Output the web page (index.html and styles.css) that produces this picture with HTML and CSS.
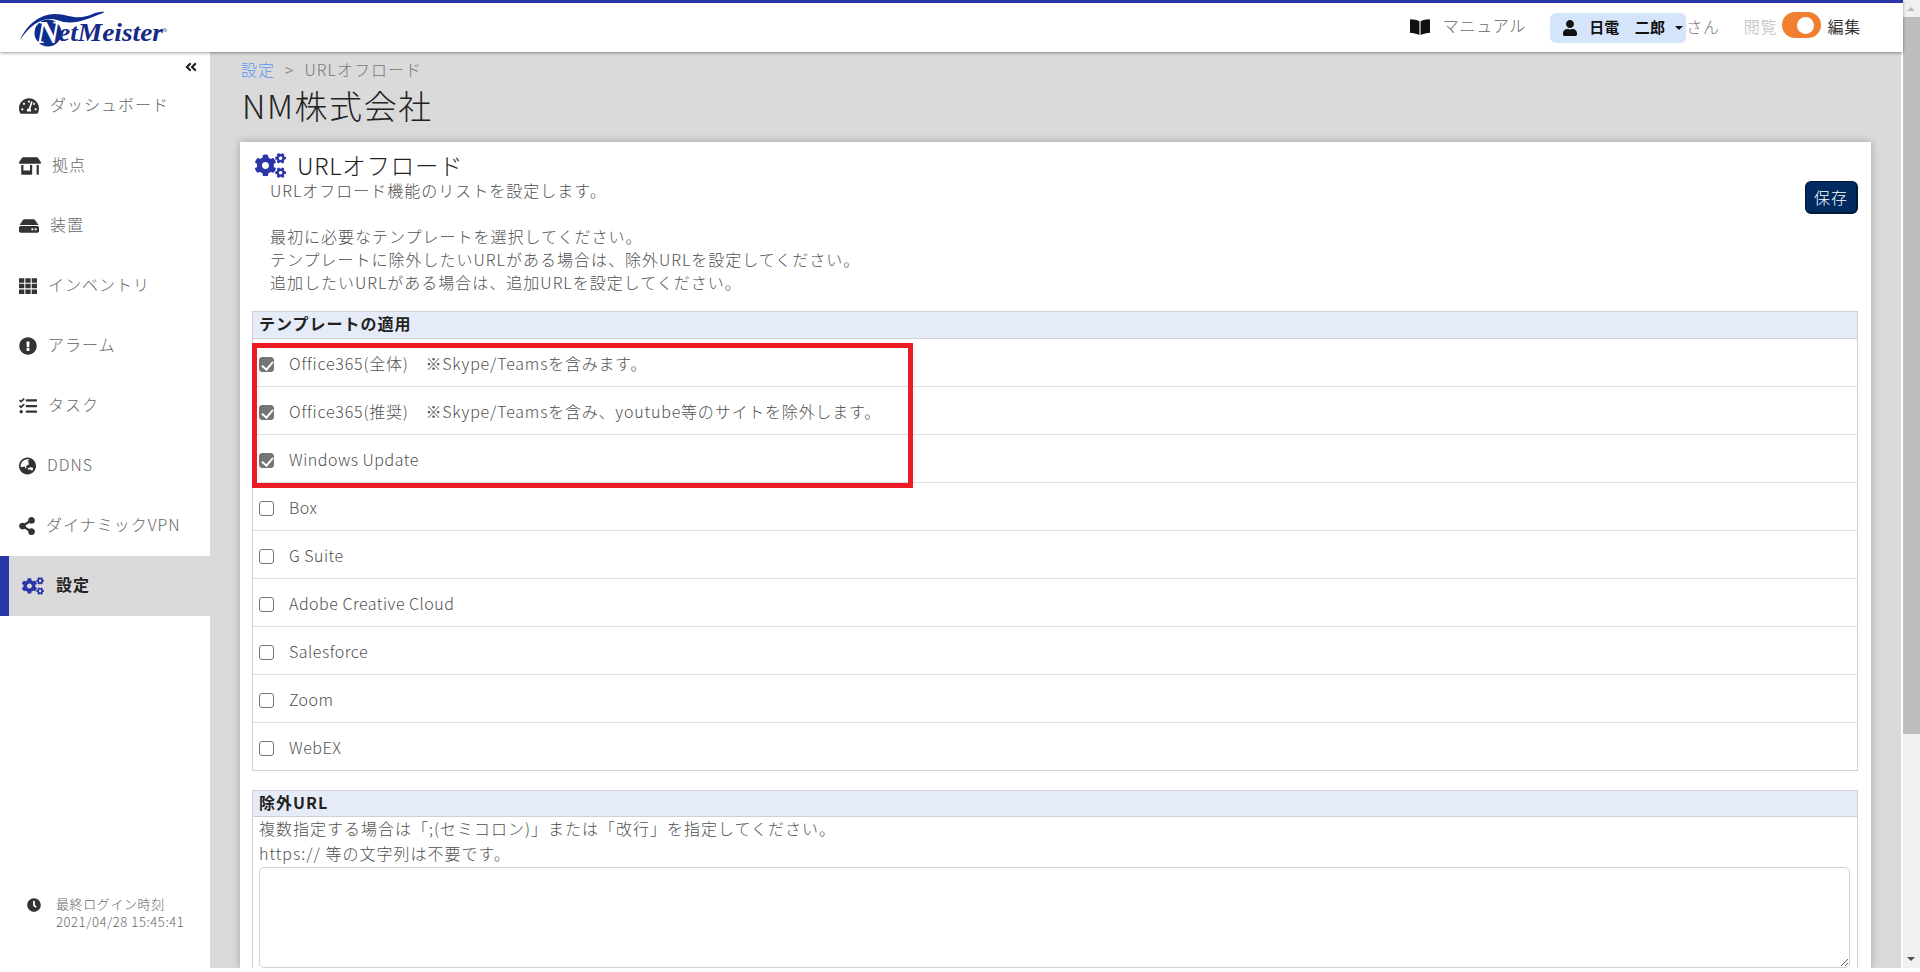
FILE: index.html
```html
<!DOCTYPE html>
<html lang="ja">
<head>
<meta charset="utf-8">
<title>URLオフロード</title>
<link rel="stylesheet" href="styles.css">
</head>
<body>
<div class="app">
  <div class="page">
    <header class="topbar">
      <a class="logo" href="#">
        <svg width="150" height="36" viewBox="0 0 150 36">
          <path class="logo-swoosh" d="M1 27C7 13 20 1 36 1c14 0 22 8 40-1 6-1 12-2 8 0C66 7 54 13 38 7 26 3 12 10 1 27z"/>
          <circle class="logo-disc" cx="29" cy="20" r="13.5"/>
          <text class="logo-n" x="17" y="30" textLength="24" lengthAdjust="spacingAndGlyphs">N</text>
          <text class="logo-text" x="39" y="28" textLength="105" lengthAdjust="spacingAndGlyphs">etMeister</text>
          <circle class="logo-reg" cx="146" cy="17" r="1.4"/>
        </svg>
      </a>
      <div class="top-right">
        <svg class="ic-book" viewBox="0 0 576 512" width="20" height="18"><path d="M542.22 32.05c-54.8 3.11-163.72 14.43-230.96 55.59-4.64 2.84-7.27 7.89-7.27 13.17v363.87c0 11.55 12.63 18.85 23.28 13.49 69.18-34.82 169.23-44.32 218.7-46.92 16.89-.89 30.02-14.43 30.02-30.66V62.75c.01-17.71-15.35-31.74-33.77-30.7zM264.73 87.64C197.5 46.48 88.58 35.17 33.78 32.05 15.36 31.01 0 45.04 0 62.75V400.6c0 16.24 13.13 29.78 30.02 30.66 49.49 2.6 149.59 12.11 218.77 46.95 10.62 5.35 23.21-1.94 23.21-13.46V100.63c0-5.29-2.62-10.1-7.27-12.99z"/></svg>
        <span class="manual">マニュアル</span>
        <div class="user-chip">
          <svg viewBox="0 0 448 512" width="14" height="16"><path d="M224 256c70.7 0 128-57.3 128-128S294.7 0 224 0 96 57.3 96 128s57.3 128 128 128zm89.6 32h-16.7c-22.2 10.2-46.9 16-72.9 16s-50.6-5.8-72.9-16h-16.7C60.2 288 0 348.2 0 422.4V464c0 26.5 21.5 48 48 48h352c26.5 0 48-21.5 48-48v-41.6c0-74.2-60.2-134.4-134.4-134.4z"/></svg>
          <span class="user-name">日電　二郎</span>
          <span class="caret"></span>
        </div>
        <span class="san">さん</span>
        <span class="view-label">閲覧</span>
        <span class="toggle"><span class="knob"></span></span>
        <span class="edit-label">編集</span>
      </div>
    </header>

    <div class="body-row">
      <aside class="sidebar">
        <div class="collapse">
          <svg viewBox="0 0 448 512" width="12" height="14"><path d="M223.7 239l136-136c9.4-9.4 24.6-9.4 33.9 0l22.6 22.6c9.4 9.4 9.4 24.6 0 33.9L319.9 256l96.4 96.4c9.4 9.4 9.4 24.6 0 33.9L393.7 409c-9.4 9.4-24.6 9.4-33.9 0l-136-136c-9.5-9.4-9.5-24.6-.1-34zm-192 34l136 136c9.4 9.4 24.6 9.4 33.9 0l22.6-22.6c9.4-9.4 9.4-24.6 0-33.9L127.9 256l96.4-96.4c9.4-9.4 9.4-24.6 0-33.9L201.7 103c-9.4-9.4-24.6-9.4-33.9 0l-136 136c-9.5 9.4-9.5 24.6-.1 34z"/></svg>
        </div>
        <nav class="menu">
          <a class="menu-item" href="#"><svg viewBox="0 0 576 512" width="20" height="18"><path d="M288 32C128.94 32 0 160.94 0 320c0 52.8 14.25 102.26 39.06 144.8 5.61 9.62 16.3 15.2 27.44 15.2h443c11.14 0 21.83-5.58 27.44-15.2C561.75 422.26 576 372.8 576 320c0-159.06-128.94-288-288-288zm0 64c14.71 0 26.58 10.13 30.32 23.65-1.11 2.26-2.64 4.23-3.45 6.67l-9.22 27.67c-5.13 3.49-10.97 6.01-17.64 6.01-17.67 0-32-14.33-32-32S270.33 96 288 96zM96 384c-17.67 0-32-14.33-32-32s14.33-32 32-32 32 14.33 32 32-14.33 32-32 32zm48-160c-17.67 0-32-14.33-32-32s14.33-32 32-32 32 14.33 32 32-14.33 32-32 32zm246.77-72.41l-61.33 184C343.13 347.33 352 364.54 352 384c0 11.72-3.38 22.55-8.88 32H232.88c-5.5-9.45-8.88-20.28-8.88-32 0-33.94 26.5-61.43 59.9-63.59l61.34-184.01c4.17-12.56 17.73-19.45 30.36-15.17 12.57 4.19 19.35 17.79 15.17 30.36zm14.66 57.2l15.52-46.55c3.47-1.29 7.13-2.23 11.05-2.23 17.67 0 32 14.33 32 32s-14.33 32-32 32c-11.38-.01-20.89-6.28-26.57-15.22zM480 384c-17.67 0-32-14.33-32-32s14.33-32 32-32 32 14.33 32 32-14.33 32-32 32z"/></svg><span>ダッシュボード</span></a>
          <a class="menu-item" href="#"><svg viewBox="0 0 640 512" width="22" height="18"><path d="M320 384H128V224H64v256c0 17.7 14.3 32 32 32h256c17.7 0 32-14.3 32-32V224h-64v160zm314.6-241.8l-85.3-128c-6-8.9-16-14.2-26.7-14.2H117.4c-10.7 0-20.7 5.3-26.6 14.2l-85.3 128c-14.2 21.3 1 49.8 26.6 49.8H608c25.5 0 40.7-28.5 26.6-49.8zM512 496c0 8.8 7.2 16 16 16h32c8.8 0 16-7.2 16-16V224h-64v272z"/></svg><span>拠点</span></a>
          <a class="menu-item" href="#"><svg viewBox="0 0 576 512" width="20" height="18"><path d="M576 304v96c0 26.51-21.49 48-48 48H48c-26.51 0-48-21.49-48-48v-96c0-26.51 21.49-48 48-48h480c26.51 0 48 21.49 48 48zm-48-80a79.557 79.557 0 0 1 30.777 6.165L462.25 85.374A48.003 48.003 0 0 0 422.311 64H153.689a48 48 0 0 0-39.938 21.374L17.223 230.165A79.557 79.557 0 0 1 48 224h480zm-48 96c-17.673 0-32 14.327-32 32s14.327 32 32 32 32-14.327 32-32-14.327-32-32-32zm-96 0c-17.673 0-32 14.327-32 32s14.327 32 32 32 32-14.327 32-32-14.327-32-32-32z"/></svg><span>装置</span></a>
          <a class="menu-item" href="#"><svg viewBox="0 0 512 512" width="18" height="18"><path d="M0 32h150v128H0zM181 32h150v128H181zM362 32h150v128H362zM0 192h150v128H0zM181 192h150v128H181zM362 192h150v128H362zM0 352h150v128H0zM181 352h150v128H181zM362 352h150v128H362z"/></svg><span>インベントリ</span></a>
          <a class="menu-item" href="#"><svg viewBox="0 0 512 512" width="18" height="18"><path d="M504 256c0 136.997-111.043 248-248 248S8 392.997 8 256C8 119.083 119.043 8 256 8s248 111.083 248 248zm-248 50c-25.405 0-46 20.595-46 46s20.595 46 46 46 46-20.595 46-46-20.595-46-46-46zm-43.673-165.346l7.418 136c.347 6.364 5.609 11.346 11.982 11.346h48.546c6.373 0 11.635-4.982 11.982-11.346l7.418-136c.375-6.874-5.098-12.654-11.982-12.654h-63.383c-6.884 0-12.356 5.78-11.981 12.654z"/></svg><span>アラーム</span></a>
          <a class="menu-item" href="#"><svg viewBox="0 0 512 512" width="18" height="18"><path d="M139.61 35.5a12 12 0 0 0-17 0L58.93 98.81l-22.7-22.12a12 12 0 0 0-17 0L3.53 92.41a12 12 0 0 0 0 17l47.59 47.4a12.78 12.78 0 0 0 17.61 0l15.59-15.62L156.52 69a12.09 12.09 0 0 0 .09-17zm0 159.19a12 12 0 0 0-17 0l-63.68 63.72-22.7-22.1a12 12 0 0 0-17 0L3.53 252a12 12 0 0 0 0 17L51 316.5a12.77 12.77 0 0 0 17.6 0l15.7-15.69 72.2-72.22a12 12 0 0 0 .09-16.9zM64 368c-26.49 0-48.59 21.5-48.59 48S37.53 464 64 464a48 48 0 0 0 0-96zm432 16H208a16 16 0 0 0-16 16v32a16 16 0 0 0 16 16h288a16 16 0 0 0 16-16v-32a16 16 0 0 0-16-16zm0-320H208a16 16 0 0 0-16 16v32a16 16 0 0 0 16 16h288a16 16 0 0 0 16-16V80a16 16 0 0 0-16-16zm0 160H208a16 16 0 0 0-16 16v32a16 16 0 0 0 16 16h288a16 16 0 0 0 16-16v-32a16 16 0 0 0-16-16z"/></svg><span>タスク</span></a>
          <a class="menu-item" href="#"><svg viewBox="0 0 496 512" width="17" height="18"><path d="M248 8C111.03 8 0 119.03 0 256s111.03 248 248 248 248-111.03 248-248S384.97 8 248 8zm-11.34 240.23c-2.89 4.82-8.1 7.77-13.72 7.77h-.31c-4.24 0-8.31 1.69-11.31 4.69l-5.66 5.66c-3.12 3.12-3.12 8.19 0 11.31l5.66 5.66c3 3 4.69 7.07 4.69 11.31V304c0 8.84-7.16 16-16 16h-6.11c-6.06 0-11.6-3.42-14.31-8.85l-22.62-45.23c-2.44-4.88-8.95-5.94-12.81-2.08l-19.47 19.46c-3 3-7.07 4.69-11.31 4.69H50.81C49.12 277.55 48 266.92 48 256c0-110.28 89.72-200 200-200 21.51 0 42.2 3.51 61.63 9.82l-50.16 38.53c-5.11 3.41-4.63 11.06.86 13.81l10.83 5.41c5.42 2.71 8.84 8.25 8.84 14.31V216c0 4.42-3.58 8-8 8h-3.06c-3.03 0-5.8-1.71-7.15-4.42-1.56-3.12-5.96-3.29-7.76-.3l-17.37 28.95zM408 358.43c0 4.24-1.69 8.31-4.69 11.31l-9.57 9.57c-3 3-7.07 4.69-11.31 4.69h-15.16c-4.24 0-8.31-1.69-11.31-4.69l-13.01-13.01a26.767 26.767 0 0 0-25.42-7.04l-21.27 5.32c-1.27.32-2.57.48-3.88.48h-10.34c-4.24 0-8.31-1.69-11.31-4.69l-11.91-11.91a8.008 8.008 0 0 1-2.34-5.66v-10.2c0-3.27 1.99-6.21 5.03-7.43l39.34-15.74c1.98-.79 3.86-1.82 5.59-3.05l23.71-16.89a7.978 7.978 0 0 1 4.64-1.48h12.09c3.23 0 6.15 1.94 7.39 4.93l5.35 12.85a4 4 0 0 0 3.69 2.46h3.8c1.78 0 3.35-1.18 3.84-2.88l4.2-14.47c.5-1.71 2.06-2.88 3.84-2.88h6.06c2.21 0 4 1.79 4 4v12.93c0 2.12.84 4.16 2.34 5.66l11.91 11.91c3 3 4.69 7.07 4.69 11.31v24.6z"/></svg><span>DDNS</span></a>
          <a class="menu-item" href="#"><svg viewBox="0 0 448 512" width="16" height="18"><path d="M352 320c-22.608 0-43.387 7.819-59.79 20.895l-102.486-64.054a96.551 96.551 0 0 0 0-41.683l102.486-64.054C308.613 184.181 329.392 192 352 192c53.019 0 96-42.981 96-96S405.019 0 352 0s-96 42.981-96 96c0 7.158.79 14.13 2.276 20.841L155.79 180.895C139.387 167.819 118.608 160 96 160c-53.019 0-96 42.981-96 96s42.981 96 96 96c22.608 0 43.387-7.819 59.79-20.895l102.486 64.054A96.301 96.301 0 0 0 256 416c0 53.019 42.981 96 96 96s96-42.981 96-96-42.981-96-96-96z"/></svg><span>ダイナミックVPN</span></a>
          <a class="menu-item active" href="#"><svg viewBox="0 0 640 512" width="22" height="18"><use href="#cogs"/></svg><span>設定</span></a>
        </nav>
        <div class="last-login">
          <svg viewBox="0 0 512 512" width="14" height="14"><path d="M256,8C119,8,8,119,8,256S119,504,256,504,504,393,504,256,393,8,256,8Zm92.49,313h0l-20,25a16,16,0,0,1-22.49,2.5h0l-67-49.72a40,40,0,0,1-15-31.23V112a16,16,0,0,1,16-16h32a16,16,0,0,1,16,16V256l58,42.5A16,16,0,0,1,348.49,321Z"/></svg>
          <div class="last-login-text">最終ログイン時刻<br>2021/04/28 15:45:41</div>
        </div>
      </aside>

      <main class="main">
        <div class="crumbs"><a class="crumb-link" href="#">設定</a><span class="crumb-sep">&gt;</span><span>URLオフロード</span></div>
        <h1 class="company">NM株式会社</h1>
        <section class="card">
          <h2 class="card-title">
            <svg class="cogs-icon" viewBox="0 0 640 512" width="31" height="25"><path id="cogs" d="M512.1 191l-8.2 14.3c-3 5.3-9.4 7.5-15.1 5.4-11.8-4.4-22.6-10.7-32.1-18.6-4.6-3.8-5.8-10.5-2.8-15.7l8.2-14.3c-6.9-8-12.3-17.3-15.9-27.4h-16.5c-6 0-11.2-4.3-12.2-10.3-2-12-2.1-24.6 0-37.1 1-6 6.2-10.4 12.2-10.4h16.5c3.6-10.1 9-19.4 15.9-27.4l-8.2-14.3c-3-5.2-1.9-11.9 2.8-15.7 9.5-7.9 20.4-14.2 32.1-18.6 5.7-2.1 12.1.1 15.1 5.4l8.2 14.3c10.5-1.9 21.2-1.9 31.7 0L552 6.3c3-5.3 9.4-7.5 15.1-5.4 11.8 4.4 22.6 10.7 32.1 18.6 4.6 3.8 5.8 10.5 2.8 15.7l-8.2 14.3c6.9 8 12.3 17.3 15.9 27.4h16.5c6 0 11.2 4.3 12.2 10.3 2 12 2.1 24.6 0 37.1-1 6-6.2 10.4-12.2 10.4h-16.5c-3.6 10.1-9 19.4-15.9 27.4l8.2 14.3c3 5.2 1.9 11.9-2.8 15.7-9.5 7.9-20.4 14.2-32.1 18.6-5.7 2.1-12.1-.1-15.1-5.4l-8.2-14.3c-10.4 1.9-21.2 1.9-31.7 0zm-10.5-58.8c38.5 29.6 82.4-14.3 52.8-52.8-38.5-29.7-82.4 14.3-52.8 52.8zM386.3 286.1l33.7 16.8c10.1 5.8 14.5 18.1 10.5 29.1-8.9 24.2-26.4 46.4-42.6 65.8-7.4 8.9-20.2 11.1-30.3 5.3l-29.1-16.8c-16 13.7-34.6 24.6-54.9 31.7v33.6c0 11.6-8.3 21.6-19.7 23.6-24.6 4.2-50.4 4.4-75.9 0-11.5-2-20-11.9-20-23.6V418c-20.3-7.2-38.9-18-54.9-31.7L74 403c-10 5.8-22.9 3.6-30.3-5.3-16.2-19.4-33.3-41.6-42.2-65.7-4-10.9.4-23.2 10.5-29.1l33.3-16.8c-3.9-20.9-3.9-42.4 0-63.4L12 205.8c-10.1-5.8-14.6-18.1-10.5-29 8.9-24.2 26-46.4 42.2-65.8 7.4-8.9 20.2-11.1 30.3-5.3l29.1 16.8c16-13.7 34.6-24.6 54.9-31.7V57.1c0-11.5 8.2-21.5 19.6-23.5 24.6-4.2 50.5-4.4 76-.1 11.5 2 20 11.9 20 23.6v33.6c20.3 7.2 38.9 18 54.9 31.7l29.1-16.8c10-5.8 22.9-3.6 30.3 5.3 16.2 19.4 33.2 41.6 42.1 65.8 4 10.9.1 23.2-10 29.1l-33.7 16.8c3.9 21 3.9 42.5 0 63.5zm-117.6 21.1c59.2-77-28.7-164.9-105.7-105.7-59.2 77 28.7 164.9 105.7 105.7zm243.4 182.7l-8.2 14.3c-3 5.3-9.4 7.5-15.1 5.4-11.8-4.4-22.6-10.7-32.1-18.6-4.6-3.8-5.8-10.5-2.8-15.7l8.2-14.3c-6.9-8-12.3-17.3-15.9-27.4h-16.5c-6 0-11.2-4.3-12.2-10.3-2-12-2.1-24.6 0-37.1 1-6 6.2-10.4 12.2-10.4h16.5c3.6-10.1 9-19.4 15.9-27.4l-8.2-14.3c-3-5.2-1.9-11.9 2.8-15.7 9.5-7.9 20.4-14.2 32.1-18.6 5.7-2.1 12.1.1 15.1 5.4l8.2 14.3c10.5-1.9 21.2-1.9 31.7 0l8.2-14.3c3-5.3 9.4-7.5 15.1-5.4 11.8 4.4 22.6 10.7 32.1 18.6 4.6 3.8 5.8 10.5 2.8 15.7l-8.2 14.3c6.9 8 12.3 17.3 15.9 27.4h16.5c6 0 11.2 4.3 12.2 10.3 2 12 2.1 24.6 0 37.1-1 6-6.2 10.4-12.2 10.4h-16.5c-3.6 10.1-9 19.4-15.9 27.4l8.2 14.3c3 5.2 1.9 11.9-2.8 15.7-9.5 7.9-20.4 14.2-32.1 18.6-5.7 2.1-12.1-.1-15.1-5.4l-8.2-14.3c-10.4 1.9-21.2 1.9-31.7 0zM501.6 431c38.5 29.6 82.4-14.3 52.8-52.8-38.5-29.6-82.4 14.3-52.8 52.8z"/></svg>
            <span>URLオフロード</span>
          </h2>
          <div class="intro">
            <p class="intro-text">URLオフロード機能のリストを設定します。<br><br>最初に必要なテンプレートを選択してください。<br>テンプレートに除外したいURLがある場合は、除外URLを設定してください。<br>追加したいURLがある場合は、追加URLを設定してください。</p>
            <button class="save" type="button">保存</button>
          </div>

          <div class="panel">
            <h3 class="panel-head">テンプレートの適用</h3>
            <label class="row"><input type="checkbox" checked><span>Office365(全体)　※Skype/Teamsを含みます。</span></label>
            <label class="row"><input type="checkbox" checked><span>Office365(推奨)　※Skype/Teamsを含み、youtube等のサイトを除外します。</span></label>
            <label class="row row-latin"><input type="checkbox" checked><span>Windows Update</span></label>
            <label class="row row-latin"><input type="checkbox"><span>Box</span></label>
            <label class="row row-latin"><input type="checkbox"><span>G Suite</span></label>
            <label class="row row-latin"><input type="checkbox"><span>Adobe Creative Cloud</span></label>
            <label class="row row-latin"><input type="checkbox"><span>Salesforce</span></label>
            <label class="row row-latin"><input type="checkbox"><span>Zoom</span></label>
            <label class="row row-latin"><input type="checkbox"><span>WebEX</span></label>
            <div class="highlight"></div>
          </div>

          <div class="panel panel-exclude">
            <h3 class="panel-head">除外URL</h3>
            <div class="panel-body">
              <p class="note">複数指定する場合は「;(セミコロン)」または「改行」を指定してください。</p>
              <p class="note">https:// 等の文字列は不要です。</p>
              <textarea class="url-box"></textarea>
            </div>
          </div>
        </section>
      </main>
    </div>
  </div>
  <div class="scrollbar">
    <span class="sb-up"></span>
    <span class="sb-thumb"></span>
    <span class="sb-down"></span>
  </div>
</div>
</body>
</html>
```
FILE: styles.css
```css
* { box-sizing: border-box; }
html, body { margin: 0; height: 972px; overflow: hidden; background: #fff; }
body {
  font-family: "Noto Sans CJK JP", "Noto Sans", sans-serif;
  font-size: 16px;
  font-weight: 300;
  letter-spacing: 1px;
  color: #505050;
}
a { color: inherit; text-decoration: none; }
p, h1, h2, h3 { margin: 0; }

.app { display: flex; height: 968px; }
.page { flex: 1; min-width: 0; display: flex; flex-direction: column; }

/* top bar */
.topbar {
  position: relative;
  z-index: 2;
  flex: none;
  height: 52px;
  border-top: 3px solid #2a35a8;
  background: #fff;
  box-shadow: 0 1px 3px rgba(0,0,0,.4);
  display: flex;
  align-items: center;
  padding: 0 42px 0 19px;
}
.logo { display: block; height: 36px; margin-top: 6px; }
.logo svg { display: block; overflow: visible; }
.logo-swoosh, .logo-disc { fill: #0f2c8f; }
.logo-n { font: italic 700 31px "Liberation Serif", serif; fill: #fff; letter-spacing: 0; }
.logo-text { font: italic 700 25px "Liberation Serif", serif; fill: #142a86; letter-spacing: 0; }
.logo-reg { fill: none; stroke: #5a6cae; stroke-width: .8; }

.top-right { margin-left: auto; display: flex; align-items: center; }
.ic-book { fill: #111; margin: 0 13px 2px 0; }
.manual { color: #666; margin-bottom: 5px; letter-spacing: .8px; }
.user-chip {
  display: flex;
  align-items: center;
  width: 136px;
  height: 30px;
  margin-left: 24px;
  padding-left: 13px;
  border-radius: 6px;
  background: #d4e5fb;
}
.user-chip svg { fill: #111; }
.user-name { margin: 0 0 2px 12px; font-size: 15px; font-weight: 700; color: #111; letter-spacing: .2px; }
.caret {
  margin-left: 10px;
  border-top: 4px solid #111;
  border-left: 4px solid transparent;
  border-right: 4px solid transparent;
}
.san { margin: 0 0 4px 0; color: #777; letter-spacing: .8px; }
.view-label { margin: 0 0 4px 24px; color: #bbb; letter-spacing: .8px; }
.toggle {
  display: flex;
  align-items: center;
  justify-content: flex-end;
  width: 39px;
  height: 26px;
  margin: 0 0 5px 5px;
  padding-right: 7px;
  border-radius: 13px;
  background: #f08030;
}
.knob { width: 17px; height: 17px; border-radius: 50%; background: #fff; }
.edit-label { margin: 0 0 4px 6px; color: #333; font-weight: 400; letter-spacing: .8px; }

/* layout below the bar */
.body-row { flex: 1; min-height: 0; display: flex; }

/* sidebar */
.sidebar {
  flex: none;
  width: 210px;
  display: flex;
  flex-direction: column;
  background: #fff;
}
.collapse { height: 24px; padding: 8px 13px 0 0; display: flex; justify-content: flex-end; align-items: flex-start; }
.collapse svg { fill: #222; }
.menu { display: flex; flex-direction: column; }
.menu-item {
  height: 60px;
  display: flex;
  align-items: center;
  gap: 11px;
  padding-left: 19px;
  color: #666;
}
.menu-item span { padding-bottom: 5px; }
.menu-item svg { fill: #333; flex: none; }
.menu-item.active {
  padding-left: 13px;
  border-left: 9px solid #2a35a8;
  background: #dadada;
  color: #222;
  font-weight: 700;
  gap: 12px;
}
.menu-item.active svg { fill: #2a35a8; }
.last-login {
  margin: auto 0 37px 27px;
  display: flex;
  align-items: flex-start;
  gap: 15px;
  font-size: 13px;
  letter-spacing: .6px;
  line-height: 18px;
  color: #666;
}
.last-login svg { fill: #333; flex: none; margin-top: 3px; }

/* main */
.main {
  flex: 1;
  min-width: 0;
  margin-right: 2px;
  padding: 5px 30px 0;
  overflow: hidden;
  background: #dadada;
}
.crumbs { height: 24px; line-height: 24px; padding-left: 1px; color: #777; }
.crumb-link { color: #5b96f0; }
.crumb-sep { margin: 0 10px; }
.company {
  height: 48px;
  margin-bottom: 13px;
  line-height: 48px;
  padding-left: 2px;
  font-size: 33px;
  font-weight: 300;
  letter-spacing: 1.6px;
  color: #222;
}
.card {
  padding: 11px 13px 0 12px;
  background: #fff;
  box-shadow: 0 0 8px rgba(0,0,0,.25);
}
.card-title {
  height: 25px;
  display: flex;
  align-items: center;
  gap: 11px;
  padding-left: 3px;
  font-size: 23.4px;
  font-weight: 300;
  letter-spacing: .8px;
  line-height: 25px;
  color: #222;
}
.cogs-icon { fill: #2a35a8; flex: none; }
.intro { display: flex; justify-content: space-between; align-items: flex-start; margin: 1px 0 17px; }
.intro-text { padding-left: 18px; line-height: 23px; }
.save {
  width: 53px;
  height: 33px;
  margin: 2px 0 0;
  padding: 0;
  border: 1px solid #001a3c;
  border-width: 1px 2px 2px 1px;
  border-radius: 6px;
  background: #002a60;
  color: #fff;
  font: inherit;
  letter-spacing: 1px;
}

/* panels */
.panel { position: relative; border: 1px solid #cfcfd6; }
.panel-head {
  height: 27px;
  padding-left: 6px;
  line-height: 23px;
  font-size: 16px;
  font-weight: 700;
  color: #222;
  background: #e6ecf7;
  border-bottom: 1px solid #cfcfd6;
}
.row {
  display: flex;
  align-items: center;
  gap: 15px;
  height: 48px;
  padding-left: 6px;
  border-bottom: 1px solid #dcdce2;
  letter-spacing: .8px;
}
.row-latin { letter-spacing: .5px; }
.row:nth-last-of-type(1) { border-bottom: 0; height: 47px; }
.row input {
  appearance: none;
  flex: none;
  position: relative;
  width: 15px;
  height: 15px;
  margin: 4px 0 0;
  border: 1px solid #777;
  border-radius: 3px;
  background: #fff;
}
.row input:checked { background: #757575; border-color: #757575; }
.row input:checked::after {
  content: "";
  position: absolute;
  left: 4px;
  top: 1px;
  width: 5px;
  height: 9px;
  border: solid #fff;
  border-width: 0 2px 2px 0;
  transform: rotate(40deg);
}
.highlight {
  position: absolute;
  left: -1px;
  top: 31px;
  width: 661px;
  height: 145px;
  border: 5px solid #ed1c24;
  pointer-events: none;
}
.panel-exclude { margin-top: 19px; border-bottom: 0; }
.panel-exclude .panel-head { height: 26px; }
.panel-body { margin-top: -1px; padding: 0 7px 0 6px; }
.note { line-height: 25px; }
.url-box {
  display: block;
  width: 100%;
  height: 101px;
  margin-top: 1px;
  border: 1px solid #d0d0d6;
  border-radius: 5px;
  background: #fff;
  resize: vertical;
  outline: 0;
}

/* scrollbar */
.scrollbar {
  flex: none;
  width: 17px;
  background: #f0f0f0;
  display: flex;
  flex-direction: column;
  align-items: center;
}
.sb-up, .sb-down { flex: none; height: 17px; width: 100%; position: relative; }
.sb-up::after, .sb-down::after {
  content: "";
  position: absolute;
  left: 4px;
  border-left: 4px solid transparent;
  border-right: 4px solid transparent;
}
.sb-up::after { top: 7px; border-bottom: 4px solid #b8b8b8; }
.sb-down::after { top: 6px; border-top: 4px solid #505050; }
.sb-thumb { flex: none; width: 100%; height: 717px; background: #bdbdbd; }
.sb-down { margin-top: auto; }
```
